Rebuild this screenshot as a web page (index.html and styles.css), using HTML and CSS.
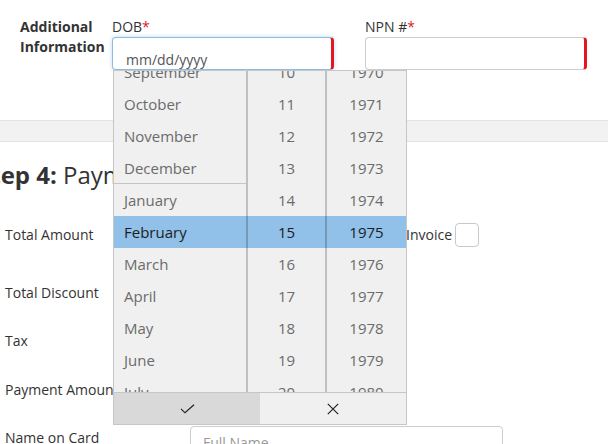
FILE: index.html
```html
<!DOCTYPE html>
<html lang="en">
<head>
<meta charset="utf-8">
<title>Enrollment</title>
<link rel="stylesheet" href="styles.css">
</head>
<body>
<div class="page">
  <section class="additional">
    <div class="section-label">Additional<br>Information</div>
    <div class="field">
      <div class="field-label">DOB<span class="req">*</span></div>
      <div class="text-box focused">mm/dd/yyyy</div>
    </div>
    <div class="field field-npn">
      <div class="field-label">NPN #<span class="req">*</span></div>
      <div class="text-box"></div>
    </div>
  </section>

  <div class="band"></div>

  <section class="payment">
    <h2 class="step-title"><b>Step 4:</b> Payment Information</h2>
    <div class="form">
      <div class="row row-amount">
        <div class="row-label">Total Amount</div>
        <div class="row-input short"></div>
        <div class="invoice">Invoice</div>
        <div class="checkbox"></div>
      </div>
      <div class="row row-discount">
        <div class="row-label">Total Discount</div>
        <div class="row-input short"></div>
      </div>
      <div class="row row-tax">
        <div class="row-label">Tax</div>
        <div class="row-input short"></div>
      </div>
      <div class="row row-payment">
        <div class="row-label">Payment Amount</div>
        <div class="row-input short"></div>
      </div>
      <div class="row row-name">
        <div class="row-label">Name on Card</div>
        <div class="row-input wide"><span class="placeholder">Full Name</span></div>
      </div>
    </div>
  </section>

  <div class="picker">
    <div class="wheels">
      <div class="highlight"></div>
      <ul class="wheel wheel-month">
        <li>September</li>
        <li>October</li>
        <li>November</li>
        <li class="year-end">December</li>
        <li>January</li>
        <li class="selected">February</li>
        <li>March</li>
        <li>April</li>
        <li>May</li>
        <li>June</li>
        <li>July</li>
      </ul>
      <ul class="wheel wheel-day">
        <li>10</li>
        <li>11</li>
        <li>12</li>
        <li>13</li>
        <li>14</li>
        <li class="selected">15</li>
        <li>16</li>
        <li>17</li>
        <li>18</li>
        <li>19</li>
        <li>20</li>
      </ul>
      <ul class="wheel wheel-year">
        <li>1970</li>
        <li>1971</li>
        <li>1972</li>
        <li>1973</li>
        <li>1974</li>
        <li class="selected">1975</li>
        <li>1976</li>
        <li>1977</li>
        <li>1978</li>
        <li>1979</li>
        <li>1980</li>
      </ul>
    </div>
    <div class="picker-actions">
      <button class="action action-ok" type="button">
        <svg width="15" height="10" viewBox="0 0 15 10"><path d="M1 4.8 L5 8.8 L14 0.8" fill="none" stroke="#222" stroke-width="1.2"/></svg>
      </button>
      <button class="action action-cancel" type="button">
        <svg width="12" height="12" viewBox="0 0 12 12"><path d="M0.8 0.8 L11.2 11.2 M11.2 0.8 L0.8 11.2" fill="none" stroke="#222" stroke-width="1.2"/></svg>
      </button>
    </div>
  </div>
</div>
</body>
</html>
```

FILE: styles.css
```css
html, body {
  margin: 0;
  padding: 0;
}

body {
  font-family: "Open Sans", "DejaVu Sans", sans-serif;
  color: #333;
  background: #fff;
  overflow: hidden;
}

.page {
  position: relative;
  width: 608px;
  height: 444px;
}

/* Additional information */
.additional {
  display: flex;
  padding: 17px 0 0 20px;
}

.section-label {
  width: 92px;
  flex: none;
  font-size: 14px;
  line-height: 20px;
  font-weight: 700;
}

.field {
  width: 222px;
  flex: none;
  display: flex;
  flex-direction: column;
}

.field-npn {
  margin-left: 31px;
}

.field-label {
  font-size: 14px;
  line-height: 20px;
}

.req {
  color: #e3141c;
}

.text-box {
  box-sizing: border-box;
  height: 33px;
  border: 1px solid #cccccc;
  border-right: 3px solid #e4161f;
  border-radius: 4px;
  background: #fff;
}

.text-box.focused {
  border-color: #8dbbe4;
  border-right-color: #e4161f;
  box-shadow: 0 0 4px rgba(102, 175, 233, 0.45);
  padding: 12px 0 0 13px;
  font-size: 14px;
  line-height: 20px;
  color: #555;
  overflow: hidden;
}

.band {
  margin-top: 50px;
  height: 20px;
  border-top: 1px solid #e2e2e2;
  border-bottom: 1px solid #e2e2e2;
  background: #f2f2f2;
}

/* Payment */
.step-title {
  margin: 18px 0 0 -23px;
  font-size: 24px;
  line-height: 30px;
  font-weight: 400;
  white-space: nowrap;
}

.step-title b {
  font-weight: 700;
}

.form {
  margin-top: 29px;
  padding-left: 5px;
}

.row {
  display: flex;
  align-items: center;
  height: 32px;
}

.row-discount { margin-top: 26px; }
.row-tax { margin-top: 16px; }
.row-payment { margin-top: 17px; }
.row-name {
  margin-top: 20px;
  align-items: flex-start;
  height: 34px;
}

.row-label {
  width: 185px;
  flex: none;
  font-size: 14px;
  line-height: 20px;
  white-space: nowrap;
}

.row-name .row-label {
  padding-top: 2px;
}

.row-input {
  box-sizing: border-box;
  height: 32px;
  border: 1px solid #ccc;
  border-radius: 4px;
}

.row-input.short {
  width: 210px;
}

.row-input.wide {
  width: 313px;
  height: 34px;
  padding: 6px 0 0 12px;
  font-size: 14px;
  line-height: 20px;
}

.placeholder {
  color: #9a9a9a;
}

.invoice {
  margin-left: 6px;
  font-size: 14px;
  line-height: 20px;
}

.checkbox {
  box-sizing: border-box;
  width: 24px;
  height: 24px;
  margin-left: 3px;
  border: 1px solid #c9c9c9;
  border-radius: 4px;
  background: #fff;
}

/* Date picker dropdown */
.picker {
  position: absolute;
  left: 113px;
  top: 70px;
  width: 294px;
  box-sizing: border-box;
  border: 1px solid #c6c6c6;
  background: #f0f0f0;
}

.wheels {
  position: relative;
  display: flex;
  height: 321px;
  overflow: hidden;
}

.highlight {
  position: absolute;
  left: 0;
  right: 0;
  top: 145px;
  height: 32px;
  background: #91c0e8;
}

.wheel {
  position: relative;
  list-style: none;
  margin: -15px 0 0;
  padding: 0;
  flex: none;
  font-size: 15px;
  color: #6b6b6b;
}

.wheel li {
  box-sizing: border-box;
  height: 32px;
  line-height: 32px;
  white-space: nowrap;
}

.wheel-month {
  width: 132px;
  border-right: 2px solid rgba(0, 0, 0, 0.2);
}

.wheel-month li {
  padding-left: 10px;
}

.wheel-month li.year-end {
  border-bottom: 1px solid rgba(0, 0, 0, 0.18);
}

.wheel-day {
  width: 77px;
  border-right: 2px solid rgba(0, 0, 0, 0.2);
  text-align: center;
}

.wheel-year {
  width: 79px;
  text-align: center;
}

.wheel li.selected {
  color: #1d1d1d;
}

.picker-actions {
  display: flex;
  height: 31px;
  border-top: 1px solid #c6c6c6;
}

.action {
  flex: 1;
  margin: 0;
  padding: 0;
  border: 0;
  display: flex;
  align-items: center;
  justify-content: center;
  font: inherit;
}

.action-ok {
  background: #d9d9d9;
}

.action-cancel {
  background: #f0f0f0;
}

.action svg {
  display: block;
}
```
